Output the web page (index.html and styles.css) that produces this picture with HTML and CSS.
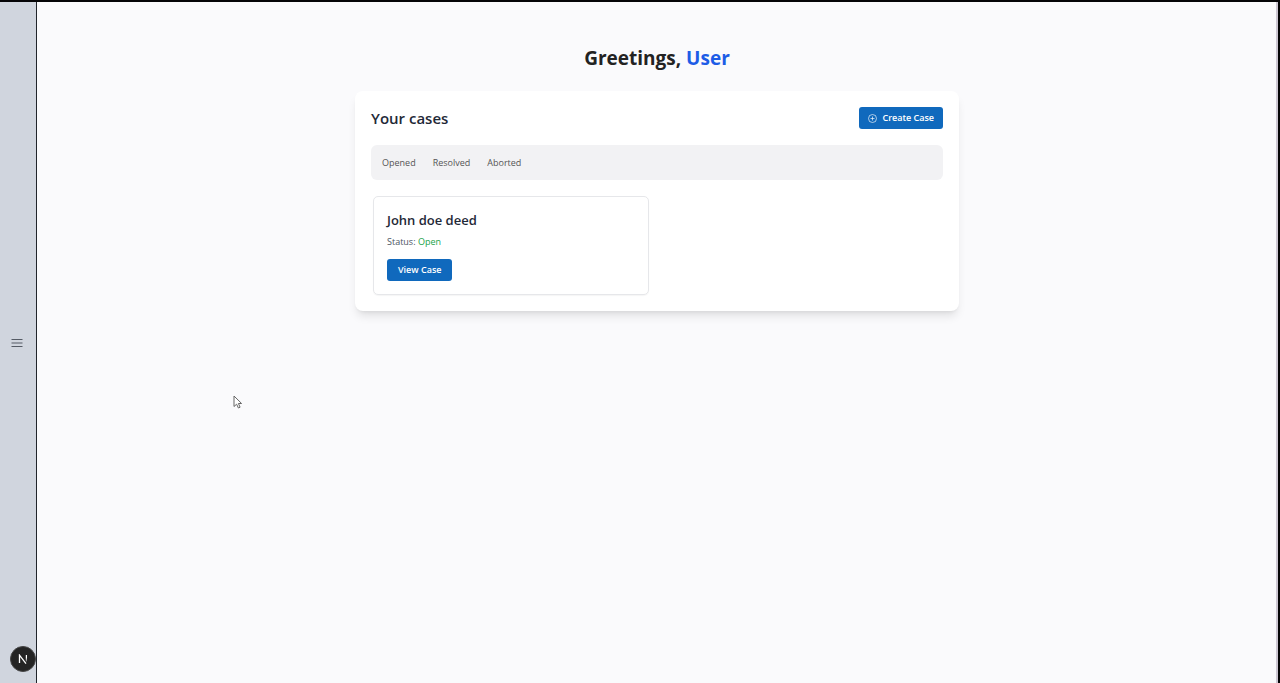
FILE: index.html
```html
<!DOCTYPE html>
<html lang="en">
<head>
<meta charset="utf-8">
<meta name="viewport" content="width=device-width, initial-scale=1">
<title>Your cases</title>
<link rel="stylesheet" href="styles.css">
</head>
<body>
<div class="app">
  <aside class="sidebar">
    <button class="menu-button" type="button" aria-label="Open menu">
      <svg width="12" height="10" viewBox="0 0 12 10" fill="none" stroke="currentColor" stroke-width="1.2" aria-hidden="true"><path d="M.5 1.5h11M.5 5h11M.5 8.5h11"/></svg>
    </button>
  </aside>
  <main class="main">
    <h1 class="greeting">Greetings, <span class="greeting-name">User</span></h1>
    <section class="panel">
      <header class="panel-header">
        <h2 class="panel-title">Your cases</h2>
        <button class="button" type="button">
          <svg class="button-icon" width="9" height="9" viewBox="0 0 18 18" fill="none" stroke="currentColor" stroke-width="1.3" aria-hidden="true"><circle cx="9" cy="9" r="8"/><path d="M9 5v8M5 9h8"/></svg>
          Create Case
        </button>
      </header>
      <nav class="tabs">
        <button class="tab" type="button">Opened</button>
        <button class="tab" type="button">Resolved</button>
        <button class="tab" type="button">Aborted</button>
      </nav>
      <div class="cases">
        <article class="case">
          <h3 class="case-title">John doe deed</h3>
          <p class="case-status">Status: <span class="case-open">Open</span></p>
          <button class="button button-wide" type="button">View Case</button>
        </article>
      </div>
    </section>
  </main>
</div>
<button class="dev-badge" type="button" aria-label="Developer tools">
  <svg width="10" height="10" viewBox="0 0 10 10" fill="none" aria-hidden="true">
    <defs><linearGradient id="fade" x1="0" y1="0" x2="0" y2="1"><stop offset=".4" stop-color="#fff"/><stop offset="1" stop-color="#fff" stop-opacity=".3"/></linearGradient></defs>
    <path d="M1.5 9V1.2L8 9.6" stroke="#fff" stroke-width="1.3"/><path d="M7.8 1h1.2v6.5H7.8z" fill="url(#fade)"/>
  </svg>
</button>
<svg class="cursor" width="10" height="14" viewBox="0 0 10 14" aria-hidden="true"><path d="M1 1v10.5l2.6-2.3 1.8 3.8 1.7-.8-1.7-3.7H8.6z" fill="#fff" stroke="#666" stroke-width="1" stroke-linejoin="round"/></svg>
</body>
</html>
```
FILE: styles.css
```css
* {
  box-sizing: border-box;
}

body {
  margin: 0;
  font-family: "Segoe UI", "Open Sans", "Noto Sans", sans-serif;
  color: #1f2937;
}

h1,
h2,
h3,
p {
  margin: 0;
}

button {
  font: inherit;
  cursor: pointer;
}

.app {
  display: flex;
  min-height: 100vh;
  border-top: 2px solid #050507;
  border-right: 2px solid #050507;
  background: #fafafc;
}

.sidebar {
  display: flex;
  align-items: center;
  justify-content: center;
  width: 37px;
  padding-right: 2px;
  border-right: 1px solid #20242b;
  background: #d0d5de;
}

.menu-button {
  display: flex;
  padding: 4px;
  border: 0;
  background: none;
  color: #555b65;
}

.main {
  flex: 1;
  padding: 43px 16px 44px 17px;
  border-right: 2px solid #ccc6d2;
}

.greeting {
  margin-bottom: 20px;
  font-size: 19px;
  font-weight: 700;
  line-height: 26px;
  text-align: center;
  color: #222;
}

.greeting-name {
  color: #1d5ce6;
}

.panel {
  max-width: 604px;
  margin: 0 auto;
  padding: 16px;
  border-radius: 8px;
  background: #fff;
  box-shadow: 0 7px 10px -2px rgb(0 0 0 / 10%), 0 3px 4px -3px rgb(0 0 0 / 10%);
}

.panel-header {
  display: flex;
  align-items: flex-start;
  justify-content: space-between;
  margin-bottom: 15px;
}

.panel-title {
  font-size: 15px;
  font-weight: 600;
  line-height: 23px;
}

.button {
  display: inline-flex;
  align-items: center;
  gap: 5px;
  height: 22px;
  padding: 0 9px;
  border: 0;
  border-radius: 3px;
  background: #1069bd;
  color: #fff;
  font-size: 9px;
  font-weight: 600;
  line-height: 12px;
}

.button-wide {
  padding: 0 11px;
}

.tabs {
  display: flex;
  gap: 17px;
  padding: 11px;
  border-radius: 6px;
  background: #f2f2f4;
}

.tab {
  padding: 0;
  border: 0;
  background: none;
  color: #555;
  font-size: 9px;
  line-height: 13px;
}

.cases {
  display: grid;
  grid-template-columns: repeat(2, 1fr);
  gap: 16px;
  padding: 16px 2px 0;
}

.case {
  display: flex;
  flex-direction: column;
  align-items: flex-start;
  padding: 13px;
  border: 1px solid #e6e7ea;
  border-radius: 5px;
  box-shadow: 0 1px 1px rgb(0 0 0 / 4%);
}

.case-title {
  font-size: 13px;
  font-weight: 600;
  line-height: 20px;
}

.case-status {
  margin: 5px 0 10px;
  font-size: 9px;
  line-height: 14px;
  color: #4b5563;
}

.case-open {
  color: #22a34a;
}

.dev-badge {
  position: fixed;
  bottom: 11px;
  left: 10px;
  display: flex;
  align-items: center;
  justify-content: center;
  width: 26px;
  height: 26px;
  padding: 0;
  border: 1px solid #444;
  border-radius: 50%;
  background: #242424;
}

.cursor {
  position: fixed;
  top: 395px;
  left: 233px;
}
```
